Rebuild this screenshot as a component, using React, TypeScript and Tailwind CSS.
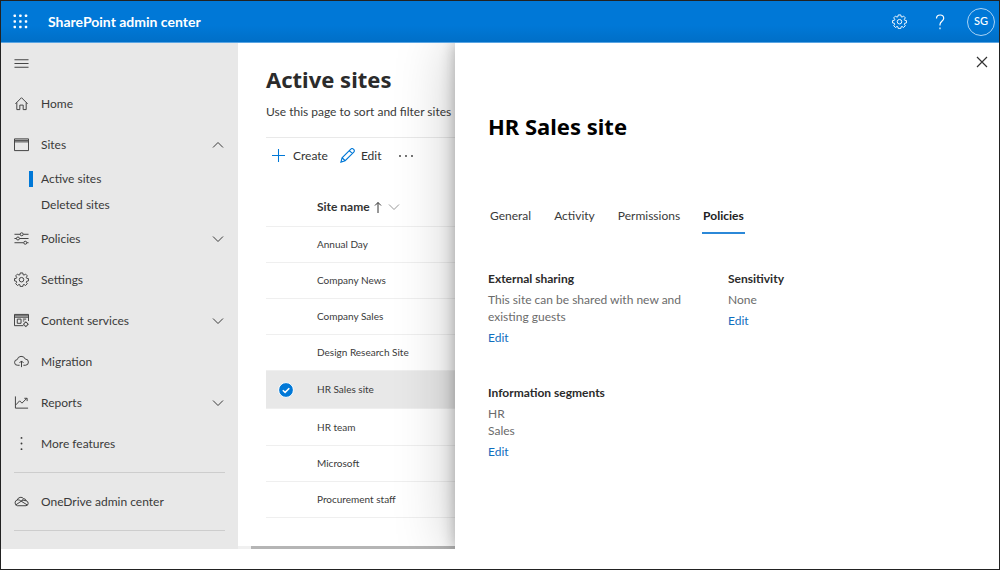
import type { ReactNode } from "react";

function Icon({ children, className = "size-4" }: { children: ReactNode; className?: string }) {
  return (
    <svg viewBox="0 0 16 16" fill="none" stroke="currentColor" strokeWidth="1" className={`shrink-0 ${className}`} aria-hidden="true">
      {children}
    </svg>
  );
}

const gear = (
  <>
    <path d="M6.600 1h2.800l.3 1.900 1 .4 1.600-1.100 1.900 1.900-1.100 1.600.4 1 1.900.3v2.500l-1.900.4-.4 1 1.100 1.600-1.900 1.900-1.600-1.100-1 .4-.4 1.900H6.700l-.4-1.900-1-.4-1.600 1.100-1.900-1.900 1.100-1.600-.4-1-1.900-.4V7l1.900-.3.4-1-1.100-1.600 1.900-1.900 1.600 1.100 1-.4z" strokeLinejoin="round" />
    <circle cx="8" cy="8.200" r="2.400" />
  </>
);

const icons = {
  home: <path d="M1.500 8.300 8 1.800l6.500 6.500M3 7v7.500h3.200V9.700h3.600v4.800H13V7" />,
  sites: <path d="M.5 2h15v12.500H.5zM.5 5.200h15M1 3.600h14" />,
  policies: (
    <>
      <path d="M.5 3.500h6M10 3.500h5.500M.5 8h2M6 8h9.500M.5 12.500h9.700M13.800 12.500h1.700" />
      <circle cx="8.200" cy="3.500" r="1.600" />
      <circle cx="4.200" cy="8" r="1.600" />
      <circle cx="12" cy="12.500" r="1.600" />
    </>
  ),
  settings: gear,
  content: (
    <>
      <path d="M10 13.500H.5v-12h15v7M.5 4.500h15M.5 3h15M3.500 6.500h4v4.500h-4zM9.500 6.500h3.500M9.500 8.500h1.500" />
      <circle cx="12.600" cy="12" r="2" />
      <path d="M12.600 9v1M12.600 14v1M9.800 12h.8M14.600 12h1" />
    </>
  ),
  migration: <path d="M6 12H3.800a3 3 0 0 1-.4-6A4.500 4.500 0 0 1 12 5.400 3.300 3.300 0 0 1 12.200 12H10M8 14V7.500M5.800 9.600 8 7.400l2.200 2.200" />,
  reports: <path d="M1.500 1.500v12.500H15M2 10.500l4-4.300 2.500 2.500 5-5M11 3.500h3v3" />,
  more: (
    <g fill="currentColor" stroke="none">
      <circle cx="8" cy="2" r="1" />
      <circle cx="8" cy="8" r="1" />
      <circle cx="8" cy="14" r="1" />
    </g>
  ),
  onedrive: (
    <path d="M3.600 12.500h9.200a2.600 2.600 0 0 0 .4-5.100A3.200 3.200 0 0 0 10.300 5 3.900 3.900 0 0 0 3.500 6.300a3.200 3.200 0 0 0 .1 6.200zM3.500 6.300c1.800-.2 2.900.4 4.200 1.400l6.500 4M1.800 11.700l5.900-4 2.600-2.700M7.700 7.700c1.500-1 3.500-1.200 5.500-.3" />
  ),
};

function Chevron({ up = false, className = "size-3" }: { up?: boolean; className?: string }) {
  return (
    <svg viewBox="0 0 12 12" fill="none" stroke="currentColor" className={className} aria-hidden="true">
      <path d={up ? "M1 8.500 6 3.500l5 5" : "M1 3.500l5 5 5-5"} />
    </svg>
  );
}

function NavLink({ icon, label }: { icon: ReactNode; label: string }) {
  return (
    <a href="#" className="flex h-[41px] items-center gap-3 px-[13px]">
      <Icon className="size-[15px]">{icon}</Icon>
      <span>{label}</span>
    </a>
  );
}

function NavGroup({ icon, label, open = false }: { icon: ReactNode; label: string; open?: boolean }) {
  return (
    <button type="button" aria-expanded={open} className="flex h-[41px] w-full items-center gap-3 pr-3.5 pl-[13px] text-left">
      <Icon className="size-[15px]">{icon}</Icon>
      <span className="grow">{label}</span>
      <Chevron up={open} />
    </button>
  );
}

function Sidebar() {
  return (
    <nav className="flex w-[237px] shrink-0 flex-col bg-[#e8e8e8] pb-[18px] text-[12px] text-[#3a3a3a]">
      <button type="button" aria-label="Collapse navigation" className="flex h-10 items-center px-[13px]">
        <Icon className="size-[15px]">
          <path d="M.5 4h15M.5 8h15M.5 12h15" />
        </Icon>
      </button>
      <NavLink icon={icons.home} label="Home" />
      <NavGroup icon={icons.sites} label="Sites" open />
      <a href="#" aria-current="page" className="flex h-[27px] items-center gap-2 px-7">
        <span className="h-4 w-1 bg-[#0078d7]" />
        Active sites
      </a>
      <a href="#" className="flex h-[26px] items-center px-10">
        Deleted sites
      </a>
      <NavGroup icon={icons.policies} label="Policies" />
      <NavLink icon={icons.settings} label="Settings" />
      <NavGroup icon={icons.content} label="Content services" />
      <NavLink icon={icons.migration} label="Migration" />
      <NavGroup icon={icons.reports} label="Reports" />
      <NavLink icon={icons.more} label="More features" />
      <hr className="mx-[13px] mt-2 mb-2 border-[#cdcdcd]" />
      <NavLink icon={icons.onedrive} label="OneDrive admin center" />
      <hr className="mx-[13px] mt-2 border-[#cdcdcd]" />
    </nav>
  );
}

const sites = [
  "Annual Day",
  "Company News",
  "Company Sales",
  "Design Research Site",
  "HR Sales site",
  "HR team",
  "Microsoft",
  "Procurement staff",
];

function ActiveSites() {
  return (
    <main className="flex min-w-0 grow flex-col">
      <div className="grow pt-5 pl-7">
        <h1 className="font-['Noto_Sans',sans-serif] text-[22px] leading-8 font-bold text-[#2b2b2b]">Active sites</h1>
        <p className="mt-[9px] text-[12px] leading-4 text-[#3a3a3a]">Use this page to sort and filter sites</p>
        <div className="mt-[17px] flex h-9 items-center gap-3 border-t border-[#e9e9e9] px-1.5 text-[12px] text-[#333]">
          <button type="button" className="flex items-center gap-2">
            <Icon className="size-[13px] text-[#0078d7]">
              <path d="M8 0v16M0 8h16" strokeWidth="1.300" />
            </Icon>
            Create
          </button>
          <button type="button" className="flex items-center gap-1.5">
            <Icon className="size-[15px] text-[#0078d7]">
              <path d="M1 15l1.200-4.600L11.500 1.200a1.900 1.900 0 0 1 2.800 0l.4.4a1.900 1.900 0 0 1 0 2.800L5.500 13.600zM2.200 10.400l3.300 3.200M10 2.700 13.300 6" strokeWidth="1.200" />
            </Icon>
            Edit
          </button>
          <button type="button" aria-label="More commands" className="px-1">
            <svg viewBox="0 0 16 4" fill="currentColor" className="h-1 w-4" aria-hidden="true">
              <circle cx="2" cy="2" r="0.900" />
              <circle cx="8" cy="2" r="0.900" />
              <circle cx="14" cy="2" r="0.900" />
            </svg>
          </button>
        </div>
        <table className="mt-4 h-[329px] w-full text-left text-[10px] text-[#3a3a3a]">
          <thead>
            <tr className="h-[37px] border-b border-[#efefef]">
              <td className="w-[51px]" />
              <th className="text-[12px] font-bold text-[#333]">
                <button type="button" className="flex items-center gap-1">
                  Site name
                  <svg viewBox="0 0 8 12" fill="none" stroke="currentColor" className="h-3 w-2" aria-hidden="true">
                    <path d="M4 1.500V12M1 4.500l3-3 3 3" />
                  </svg>
                  <Chevron className="ml-0.5 size-3 text-[#999]" />
                </button>
              </th>
            </tr>
          </thead>
          <tbody>
            {sites.map((site) => {
              const selected = site === "HR Sales site";
              return (
                <tr key={site} aria-selected={selected} className={selected ? "border-b border-[#efefef] bg-[#e8e8e8]" : "border-b border-[#efefef]"}>
                  <td className="pl-3">
                    {selected && (
                      <svg viewBox="0 0 16 16" className="size-4" role="img" aria-label="Selected">
                        <circle cx="8" cy="8" r="7.400" fill="#0078d7" stroke="#fff" strokeWidth="1" />
                        <path d="M4.800 8.200l2.300 2.200 4.200-4.200" fill="none" stroke="#fff" strokeWidth="1.500" />
                      </svg>
                    )}
                  </td>
                  <td>{site}</td>
                </tr>
              );
            })}
          </tbody>
        </table>
      </div>
      <div className="flex h-[3px] bg-[#f0f0f0] pl-[13px]">
        <div className="grow bg-[#b5b5b5]" />
      </div>
    </main>
  );
}

function Policy({ title, lines }: { title: string; lines: string[] }) {
  return (
    <section className="flex flex-col items-start text-[12px] leading-[17px] text-[#6b6b6b]">
      <h3 className="mb-1 font-bold text-[#2b2b2b]">{title}</h3>
      {lines.map((line) => (
        <p key={line}>{line}</p>
      ))}
      <a href="#" className="mt-1 text-[#106ebe]">
        Edit
      </a>
    </section>
  );
}

const tabs = ["General", "Activity", "Permissions", "Policies"];

function SitePanel() {
  return (
    <aside
      aria-label="HR Sales site"
      className="absolute inset-y-0 right-0 w-[544px] bg-white px-[33px] pt-[67px] shadow-[0_0_56px_rgba(0,0,0,0.24),0_0_14px_rgba(0,0,0,0.28)]"
    >
      <button type="button" aria-label="Close" className="absolute top-[11px] right-[9px] p-0.5 text-[#333]">
        <svg viewBox="0 0 12 12" stroke="currentColor" strokeWidth="1.200" className="size-3" aria-hidden="true">
          <path d="M1 1l10 10M11 1 1 11" />
        </svg>
      </button>
      <h2 className="font-['Noto_Sans',sans-serif] text-[22px] leading-8 font-bold text-black">HR Sales site</h2>
      <div role="tablist" className="mt-14 flex gap-[21px] pl-px text-[12px] text-[#3a3a3a]">
        {tabs.map((tab) => (
          <button
            key={tab}
            type="button"
            role="tab"
            aria-selected={tab === "Policies"}
            className="h-9 border-b-2 border-transparent px-px pt-0.5 aria-selected:border-[#2b88d8] aria-selected:font-bold aria-selected:text-[#222]"
          >
            {tab}
          </button>
        ))}
      </div>
      <div className="mt-9 grid grid-cols-[200px_1fr] gap-x-10 gap-y-[38px]">
        <Policy title="External sharing" lines={["This site can be shared with new and", "existing guests"]} />
        <Policy title="Sensitivity" lines={["None"]} />
        <Policy title="Information segments" lines={["HR", "Sales"]} />
      </div>
    </aside>
  );
}

export default function App() {
  return (
    <div className="flex min-h-screen flex-col border border-[#222] bg-white font-[Lato,sans-serif]">
      <header className="flex h-[42px] items-center border-b border-[#5aa5e3] bg-linear-to-b from-[#0078d7] from-60% to-[#006fc7] pr-1 pl-3 text-white">
        <button type="button" aria-label="App launcher">
          <svg viewBox="0 0 14 14" fill="currentColor" className="size-[15px]" aria-hidden="true">
            {[0.5, 5.75, 11].map((y) => [0.5, 5.75, 11].map((x) => <rect key={`${x}-${y}`} x={x} y={y} width="2.300" height="2.300" rx="0.600" />))}
          </svg>
        </button>
        <span className="ml-5 grow text-[14px] font-bold">SharePoint admin center</span>
        <div className="flex items-center">
          <button type="button" aria-label="Settings">
            <Icon className="size-[15px]">{gear}</Icon>
          </button>
          <button type="button" aria-label="Help" className="ml-[25px]">
            <svg viewBox="0 0 16 16" fill="none" stroke="currentColor" strokeWidth="1.200" className="size-4" aria-hidden="true">
              <path d="M4.500 4.500C4.500 2 6 1 8.200 1s3.500 1.300 3.500 3.200C11.700 7.300 8 7.300 8 10.500v1M8 13.500v1.700" />
            </svg>
          </button>
          <button type="button" aria-label="Account SG" className="ml-[19px] flex size-7 items-center justify-center rounded-full border border-[#a9d3f5] text-[11px] font-medium">
            SG
          </button>
        </div>
      </header>
      <div className="relative flex overflow-hidden">
        <Sidebar />
        <ActiveSites />
        <SitePanel />
      </div>
    </div>
  );
}
